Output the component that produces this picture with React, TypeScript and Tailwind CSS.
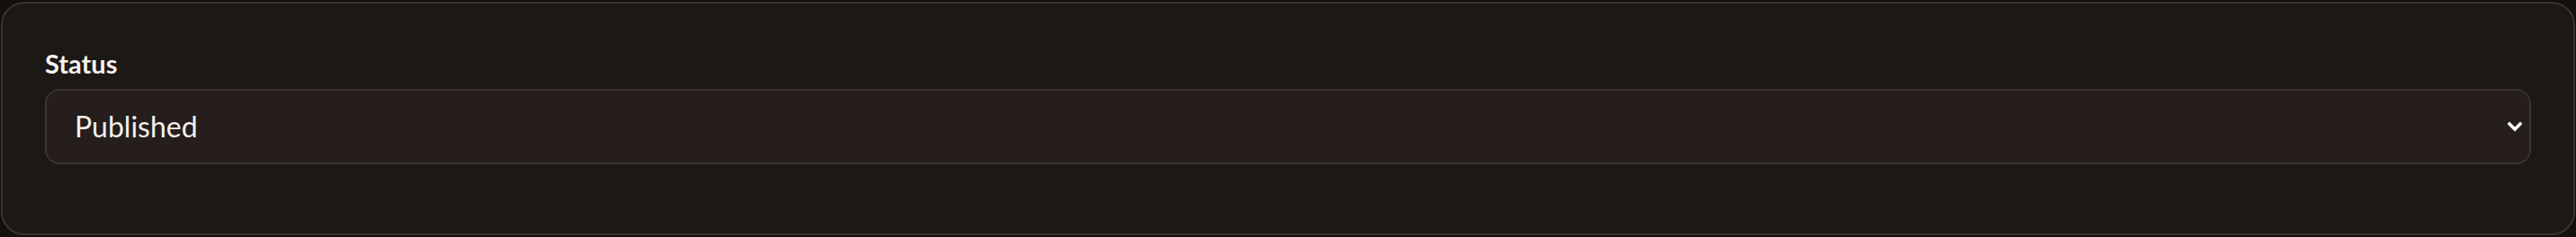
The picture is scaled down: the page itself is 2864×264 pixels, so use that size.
import { useState } from 'react'

export default function App() {
  const [status, setStatus] = useState('published')

  return (
    <div className="min-h-[264px] w-full bg-[#120f0d] px-[1px] pt-[2px] pb-[2px] font-['Lato','Noto_Sans',sans-serif]">
      {/* Settings card */}
      <div className="h-[260px] rounded-[26px] border-2 border-[#39322e] bg-[#1c1815] px-[47px] pt-[47px]">
        <label htmlFor="status" className="block text-[29px] leading-[40px] font-bold text-[#f5f1ec]">
          Status
        </label>
        <div className="relative mt-[8px]">
          <select
            id="status"
            value={status}
            onChange={(e) => setStatus(e.target.value)}
            className="block h-[84px] w-full appearance-none rounded-[16px] border-2 border-[#3a3330] bg-[#251e1c] pl-[31px] pr-[60px] text-[32px] text-[#f3eee9] outline-none"
          >
            <option value="draft">Draft</option>
            <option value="published">Published</option>
            <option value="archived">Archived</option>
          </select>
          <svg
            className="pointer-events-none absolute right-[10px] top-1/2 -translate-y-1/2"
            width="16"
            height="12"
            viewBox="0 0 16 12"
            fill="none"
          >
            <path d="M2 3 L8 9 L14 3" stroke="#ffffff" strokeWidth="3.5" strokeLinecap="square" />
          </svg>
        </div>
      </div>
    </div>
  )
}
